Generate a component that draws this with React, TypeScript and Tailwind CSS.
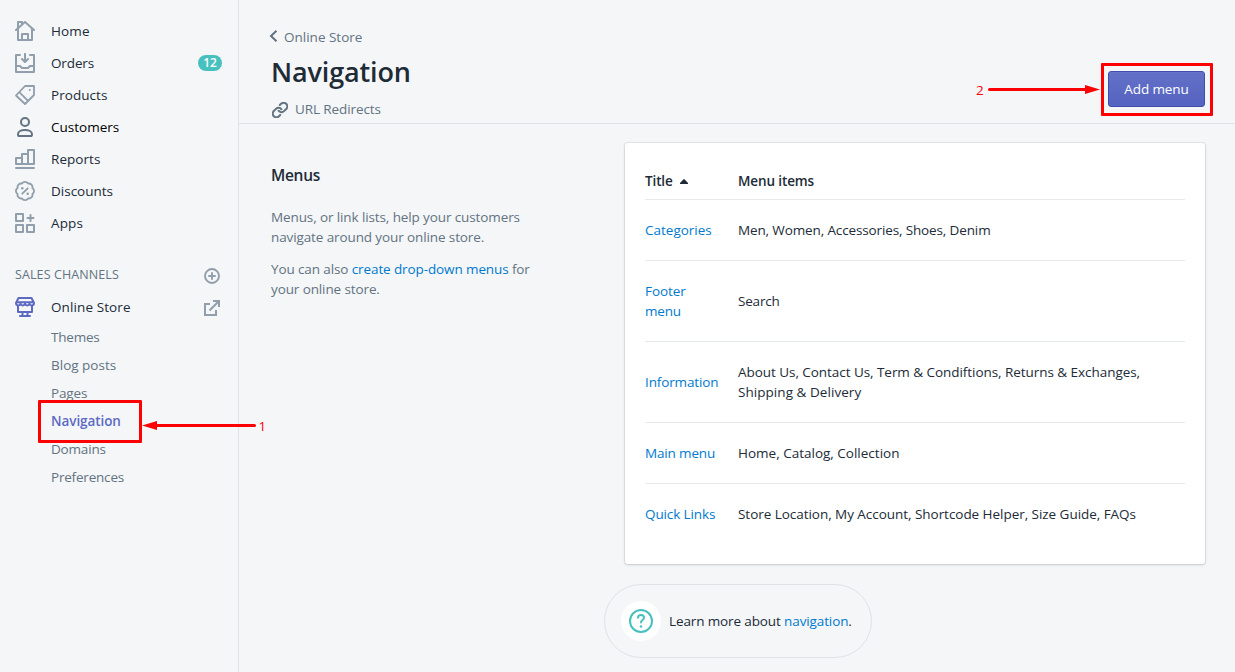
import type { ReactNode } from "react";

type IconProps = { children: ReactNode; className?: string; box?: string; width?: number };

function Icon({ children, className = "size-5 text-[#919eab]", box = "0 0 20 20", width = 2 }: IconProps) {
  return (
    <svg
      viewBox={box}
      className={`shrink-0 ${className}`}
      fill="none"
      stroke="currentColor"
      strokeWidth={width}
      strokeLinejoin="round"
      strokeLinecap="round"
    >
      {children}
    </svg>
  );
}

const nav = [
  {
    label: "Home",
    text: "tracking-[0.12px]",
    icon: (
      <Icon>
        <path
          fill="currentColor"
          stroke="none"
          d="M19.664 8.252l-9-8a1 1 0 0 0-1.328 0L8 1.44V1a1 1 0 0 0-1-1H3a1 1 0 0 0-1 1v5.773L.336 8.252a1.001 1.001 0 0 0 1.328 1.496L2 9.449V19a1 1 0 0 0 1 1h14a1 1 0 0 0 1-1V9.449l.336.299a.997.997 0 0 0 1.412-.083 1.001 1.001 0 0 0-.084-1.413zM16 18h-2v-5a1 1 0 0 0-1-1H7a1 1 0 0 0-1 1v5H4V7.671l6-5.333 6 5.333V18zm-8 0v-4h4v4H8zM4 2h2v1.218L4 4.996V2z"
        />
      </Icon>
    ),
  },
  {
    label: "Orders",
    text: "tracking-[-0.13px]",
    badge: "12",
    icon: (
      <Icon>
        <path d="M5 2H1v17h18V2h-4M1 13h4l2 2h6l2-2h4M10 .8V8M7 6l3 3 3-3" />
      </Icon>
    ),
  },
  {
    label: "Products",
    text: "tracking-[0.05px]",
    icon: (
      <Icon width={1.8}>
        <path d="M10 1h9v9l-9 9-9-8.500zM4.500 7.300l8.300 8.300" />
        <circle cx="14.800" cy="5" r="1" fill="currentColor" stroke="none" />
      </Icon>
    ),
  },
  {
    label: "Customers",
    text: "text-black",
    icon: (
      <Icon className="size-5 text-[#637381]">
        <circle cx="10" cy="5" r="4" />
        <path d="M3 17.200c0-2.400 3-4.200 7-4.200s7 1.800 7 4.200c0 1.200-.4 1.800-1 1.800H4c-.6 0-1-.6-1-1.800z" />
      </Icon>
    ),
  },
  {
    label: "Reports",
    text: "tracking-[0.05px]",
    icon: (
      <Icon>
        <path d="M1 19h18M1 15V9h6v6zM7 15V5h6v10zM13 15V1h6v14z" />
      </Icon>
    ),
  },
  {
    label: "Discounts",
    text: "",
    icon: (
      <Icon box="1 1 22 22">
        <path d="M3.850 8.620a4 4 0 0 1 4.780-4.770 4 4 0 0 1 6.740 0 4 4 0 0 1 4.780 4.780 4 4 0 0 1 0 6.740 4 4 0 0 1-4.770 4.780 4 4 0 0 1-6.750 0 4 4 0 0 1-4.780-4.770 4 4 0 0 1 0-6.760ZM15 9l-6 6" />
        <circle cx="9" cy="9" r="1.400" fill="currentColor" stroke="none" />
        <circle cx="15" cy="15" r="1.400" fill="currentColor" stroke="none" />
      </Icon>
    ),
  },
  {
    label: "Apps",
    text: "tracking-[0.15px]",
    icon: (
      <Icon>
        <path d="M1 1h7v7H1zM1 12h7v7H1zM12 12h7v7h-7zM15.500 2v6M12.500 5h6" />
      </Icon>
    ),
  },
];

const pages = [
  { label: "Themes", text: "tracking-[-0.2px]" },
  { label: "Blog posts", text: "" },
  { label: "Pages", text: "tracking-[-0.15px]" },
  { label: "Navigation", text: "font-semibold text-[#5c6ac4] tracking-[-0.08px]" },
  { label: "Domains", text: "tracking-[-0.18px]" },
  { label: "Preferences", text: "tracking-[-0.2px]" },
];

type Line = { label: string; text: string };

const menus: { title: Line[]; items: Line[] }[] = [
  {
    title: [{ label: "Categories", text: "" }],
    items: [{ label: "Men, Women, Accessories, Shoes, Denim", text: "tracking-[-0.13px]" }],
  },
  {
    title: [
      { label: "Footer", text: "tracking-[-0.08px]" },
      { label: "menu", text: "tracking-[-0.2px]" },
    ],
    items: [{ label: "Search", text: "tracking-[-0.2px]" }],
  },
  {
    title: [{ label: "Information", text: "tracking-[-0.13px]" }],
    items: [
      { label: "About Us, Contact Us, Term & Condiftions, Returns & Exchanges,", text: "tracking-[-0.05px]" },
      { label: "Shipping & Delivery", text: "tracking-[0.05px]" },
    ],
  },
  {
    title: [{ label: "Main menu", text: "tracking-[-0.15px]" }],
    items: [{ label: "Home, Catalog, Collection", text: "" }],
  },
  {
    title: [{ label: "Quick Links", text: "tracking-[-0.12px]" }],
    items: [
      { label: "Store Location, My Account, Shortcode Helper, Size Guide, FAQs", text: "tracking-[-0.04px]" },
    ],
  },
];

function Sidebar() {
  return (
    <aside className="w-[239px] shrink-0 border-r border-[#dfe3e8] pt-[15px] pl-[15px]">
      <nav>
        {nav.map((n) => (
          <a key={n.label} className="flex h-8 items-center pr-4">
            {n.icon}
            <span className={`ml-4 font-medium ${n.text}`}>{n.label}</span>
            {n.badge && (
              <span className="ml-auto flex h-4 w-6 items-center justify-center rounded-full bg-[#47c1bf] text-xs font-semibold text-white">
                {n.badge}
              </span>
            )}
          </a>
        ))}
      </nav>
      <div className="mt-5 flex h-8 items-center justify-between pr-[18px] text-[#637381]">
        <span className="mt-px text-[12.5px] font-medium tracking-[0.1px]">SALES CHANNELS</span>
        <Icon className="mt-0.5 size-4 text-[#919eab]" box="0 0 16 16" width={1.900}>
          <circle cx="8" cy="8" r="7" />
          <path d="M8 5v6M5 8h6" />
        </Icon>
      </div>
      <div className="flex h-8 items-center pr-[18px]">
        <Icon className="size-5 text-[#5c6ac4]">
          <path d="M3.500 1h13L19 6c0 3-3.800 3.200-4.500.8C13.800 9 10.700 9 10 6.800 9.300 9 6.200 9 5.500 6.800 4.800 9.200 1 9 1 6zM1.500 5.200h17M3 9v6h14V9M7.500 15v3.500M12.500 15v3.500M5 19h10" />
        </Icon>
        <span className="ml-4 font-medium tracking-[0.1px]">Online Store</span>
        <Icon className="mt-0.5 ml-auto size-4 text-[#919eab]" box="0 0 16 16">
          <path strokeLinecap="butt" strokeLinejoin="miter" d="M6 4H1v11h11v-5M5.500 10.500L14.500 1.500M9 1h6v6" />
        </Icon>
      </div>
      <ul className="pl-9 text-[#637381]">
        {pages.map((p) => (
          <li key={p.label} className="flex h-7 items-center">
            <span className={p.text}>{p.label}</span>
          </li>
        ))}
      </ul>
    </aside>
  );
}

function Header() {
  return (
    <header className="flex h-[124px] items-start justify-between border-b border-[#dfe3e8] pr-[30px] pl-[30px]">
      <div className="pt-[27px]">
        <div className="flex h-5 items-center text-[#637381]">
          <Icon className="mt-[-2px] h-3 w-[9px] text-[#637381]" box="0 0 9 12">
            <path strokeLinecap="butt" strokeLinejoin="miter" d="M7.500 .8L2 6l5.500 5.200" />
          </Icon>
          <span className="ml-[6px]">Online Store</span>
        </div>
        <h1 className="mt-[9px] pl-[2px] text-[27px] leading-8 font-semibold tracking-[-0.15px]">Navigation</h1>
        <div className="mt-[11px] flex h-5 items-center pl-[3px] text-[#637381]">
          <Icon className="mt-0.5 size-4 text-[#637381]" box="1 1 22 22" width={2.800}>
            <path d="M10 13a5 5 0 0 0 7.540.540l3-3a5 5 0 0 0-7.070-7.070l-1.720 1.710M14 11a5 5 0 0 0-7.540-.540l-3 3a5 5 0 0 0 7.070 7.070l1.710-1.710" />
          </Icon>
          <span className="ml-[7px] tracking-[-0.1px]">URL Redirects</span>
        </div>
      </div>
      <button className="mt-[71px] h-9 w-[97px] rounded-[3px] border border-[#3f4eae] bg-linear-to-b from-[#6371c7] to-[#5563c1] font-medium tracking-[-0.1px] text-white shadow-[inset_0_1px_0_#6774c8]">
        Add menu
      </button>
    </header>
  );
}

function MenuTable() {
  return (
    <div className="h-[421px] w-[580px] rounded-[3px] bg-white px-5 pt-5 shadow-[0_0_0_1px_rgba(63,63,68,0.08),0_1px_3px_0_rgba(63,63,68,0.18)]">
      <div className="flex h-[37px] items-center border-b border-[#e6e9ec] font-semibold tracking-[-0.12px]">
        <div className="flex w-[93px] items-center">
          Title
          <svg viewBox="0 0 8 5" className="ml-[7px] h-[5px] w-2" fill="#212b36">
            <path d="M0 5V4L3.500 .3h1L8 4v1z" />
          </svg>
        </div>
        <div>Menu items</div>
      </div>
      {menus.map((m) => (
        <div key={m.title[0].label} className="flex items-center border-b border-[#e6e9ec] py-5 leading-5 last:border-b-0">
          <div className="w-[93px] text-[#007ace]">
            {m.title.map((t) => (
              <div key={t.label} className={t.text}>
                {t.label}
              </div>
            ))}
          </div>
          <div className="whitespace-nowrap">
            {m.items.map((t) => (
              <div key={t.label} className={t.text}>
                {t.label}
              </div>
            ))}
          </div>
        </div>
      ))}
    </div>
  );
}

function StepMarkers() {
  return (
    <>
      <div className="absolute top-[400px] left-[38px] h-[43px] w-[104px] rounded-[1px] border-3 border-[#f00]" />
      <svg className="absolute top-[420px] left-[142px] h-[11px] w-[115px]" viewBox="0 0 115 11" fill="#f00">
        <path d="M0 5.500L15 1v3h97.500a1.500 1.500 0 0 1 0 3H15v3z" />
      </svg>
      <span className="absolute top-[416px] left-[258.5px] leading-5 text-[#f00]">1</span>
      <span className="absolute top-[80px] left-[976px] leading-5 text-[#f00]">2</span>
      <svg className="absolute top-[84px] left-[988px] h-[11px] w-[112px]" viewBox="0 0 112 11" fill="#f00">
        <path d="M112 5.500L97 1v3H1.500a1.500 1.500 0 0 0 0 3H97v3z" />
      </svg>
      <div className="absolute top-[63px] left-[1101px] h-[53px] w-[112px] rounded-[1px] border-3 border-[#f00]" />
    </>
  );
}

export default function App() {
  return (
    <div className="relative flex h-[672px] w-[1235px] overflow-hidden bg-[#f4f6f8] font-['Open_Sans',sans-serif] text-[13.5px] text-[#212b36]">
      <Sidebar />
      <main className="min-w-0 flex-1">
        <Header />
        <div className="flex justify-between pt-[19px] pr-[30px] pl-8">
          <section className="pt-[22px] leading-5 tracking-[-0.11px] text-[#637381]">
            <h2 className="mt-[-1px] text-[15.5px] leading-[22px] font-semibold tracking-[-0.3px] text-[#212b36]">Menus</h2>
            <p className="mt-[21px]">
              Menus, or link lists, help your customers
              <br />
              navigate around your online store.
            </p>
            <p className="mt-3">
              You can also <a className="text-[#007ace]">create drop-down menus</a> for
              <br />
              your online store.
            </p>
          </section>
          <MenuTable />
        </div>
        <div className="mt-5 ml-[365px] flex h-[74px] w-[268px] items-center rounded-[37px] border border-[#dfe3e8] pl-4">
          <div className="flex size-10 items-center justify-center rounded-full bg-white">
            <Icon className="size-6 text-[#47c1bf]" box="0 0 24 24">
              <circle cx="12" cy="12" r="11" />
              <path d="M9 8.700C9 7 10.300 6 12 6s3 1.100 3 2.700c0 2.300-3 2.300-3 4.800" />
              <circle cx="12" cy="17.500" r="1.200" fill="currentColor" stroke="none" />
            </Icon>
          </div>
          <span className="ml-2 tracking-[-0.12px]">
            Learn more about <a className="text-[#007ace]">navigation</a>.
          </span>
        </div>
      </main>
      <StepMarkers />
    </div>
  );
}
